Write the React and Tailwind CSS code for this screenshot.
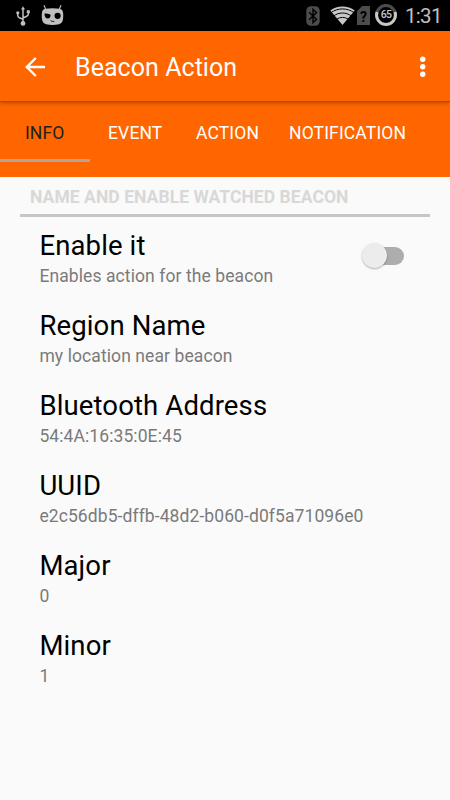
import clsx from 'clsx'

const tabs = [
  { label: 'INFO', style: 'w-[90px] pl-[25px] tracking-[0.1px]', active: true },
  { label: 'EVENT', style: 'w-[88px] pl-[18px] tracking-[0.15px]' },
  { label: 'ACTION', style: 'w-[100px] pl-[18px] tracking-[0.15px]' },
  { label: 'NOTIFICATION', style: 'grow pl-[11px] tracking-[0.15px]' },
]

const settings = [
  { title: 'Enable it', value: 'Enables action for the beacon', toggle: true },
  { title: 'Region Name', value: 'my location near beacon' },
  { title: 'Bluetooth Address', value: '54:4A:16:35:0E:45' },
  { title: 'UUID', value: 'e2c56db5-dffb-48d2-b060-d0f5a71096e0' },
  { title: 'Major', value: '0' },
  { title: 'Minor', value: '1' },
]

function UsbIcon() {
  return (
    <svg width="14" height="20" viewBox="0 0 14 20" fill="none" stroke="#c0c0c0" strokeWidth="1.5">
      <path d="M7 3v13M1.7 7v2.600c0 1.200.5 1.600 1.600 2.100L7 13.400M12.300 6v2c0 1.400-.5 1.800-1.600 2.300L7 12" />
      <path d="M7 .2l2 3.400H5z" fill="#c0c0c0" stroke="none" />
      <circle cx="7" cy="17.400" r="2.400" fill="#c0c0c0" stroke="none" />
      <circle cx="1.800" cy="6.800" r="1.600" fill="#c0c0c0" stroke="none" />
      <path d="M10.800 4.200h3v3h-3z" fill="#c0c0c0" stroke="none" />
    </svg>
  )
}

function RobotIcon() {
  return (
    <svg width="23" height="21" viewBox="0 0 23 21" fill="none">
      <path d="M3.200.6l1.600 4M19.800.6l-1.600 4" stroke="#c0c0c0" strokeWidth="1.200" strokeLinecap="round" />
      <path
        d="M4.500 3.700C9 3 14 3 18.500 3.700c2.300.4 3.200 1.600 3.500 3.800.4 2.600.3 5-.2 7.500-.5 2.300-1.600 3.600-3.800 4.200-4.300 1-8.700 1-13 0-2.200-.6-3.300-1.900-3.800-4.200-.5-2.500-.6-4.900-.2-7.500.3-2.200 1.200-3.400 3.500-3.800z"
        fill="#c0c0c0"
      />
      <path d="M3.500 8.600c1.800.1 4 .3 6.100 1.100.1 2.300-1 3.900-2.800 3.900-2.100 0-3.300-1.700-3.300-5z" fill="#000" />
      <circle cx="16.600" cy="10.800" r="3.100" fill="#000" />
      <path d="M9.500 15.400l1.300.9 2.600.2" stroke="#222" strokeWidth="1" />
    </svg>
  )
}

function BluetoothIcon() {
  return (
    <svg width="14" height="20" viewBox="0 0 14 20" fill="none">
      <rect x=".3" y=".3" width="13.400" height="19.400" rx="4.500" fill="#4c4c4c" />
      <path d="M3.200 6.200l7.300 7.200L7 16.700V3.300l3.500 3.300-7.300 7.200" stroke="#000" strokeWidth="1.400" />
    </svg>
  )
}

function WifiIcon() {
  return (
    <svg width="25" height="19" viewBox="0 0 25 19" fill="none">
      <path d="M12.500 19L.3 4.500C7-.9 18-.9 24.700 4.500z" fill="#c8c8c8" />
      <path d="M1 6.600C7.800 1.700 17.200 1.700 24 6.600M3.500 10C9 6 16 6 21.500 10M6.500 13.400c3.500-2.600 8.500-2.600 12 0" stroke="#000" strokeWidth="1" />
    </svg>
  )
}

function SimIcon() {
  return (
    <div className="flex h-[19px] w-[13px] items-center justify-center bg-[#4c4c4c] pt-[2px] text-[14px] font-bold leading-none text-black [clip-path:polygon(40%_0,100%_0,100%_100%,0_100%,0_28%)]">
      ?
    </div>
  )
}

function Battery() {
  return (
    <div className="relative flex h-[22px] w-[22px] items-center justify-center">
      <svg className="absolute inset-0" width="22" height="22" viewBox="0 0 22 22" fill="none" strokeWidth="3">
        <circle cx="11" cy="11" r="9.400" stroke="#4c4c4c" />
        <path d="M2.100 8A9.400 9.400 0 1 0 19.900 8" stroke="#c8c8c8" />
      </svg>
      <span className="text-[10.5px] font-medium leading-none tracking-[-0.6px] text-[#c8c8c8]">65</span>
    </div>
  )
}

function StatusBar() {
  return (
    <div className="flex h-[31px] items-center bg-black">
      <div className="flex grow items-center gap-[11px] pl-[16px] pt-px">
        <UsbIcon />
        <div className="-mt-[2px]">
          <RobotIcon />
        </div>
      </div>
      <div className="flex items-center pr-[8px]">
        <BluetoothIcon />
        <div className="ml-[10px]">
          <WifiIcon />
        </div>
        <div className="ml-[2px]">
          <SimIcon />
        </div>
        <div className="-mt-px ml-[5px]">
          <Battery />
        </div>
        <span className="ml-[8px] mt-[2px] w-[37px] whitespace-nowrap text-[20.5px] leading-none tracking-[-0.7px] text-[#c0c0c0]">
          1:31
        </span>
      </div>
    </div>
  )
}

function AppBar() {
  return (
    <header className="relative flex h-[71px] items-center border-b border-[#b84a02] bg-[#ff6600] pl-[25px] pr-[19px] pt-[2px] shadow-[0_1px_4px_rgba(0,0,0,0.3)]">
      <svg width="21" height="20" viewBox="0 0 21 20" fill="none" stroke="#fff" strokeWidth="2.400">
        <path d="M20 10H2M10.800 1L1.800 10l9 9" />
      </svg>
      <h1 className="grow pl-[29px] pt-[2px] text-[25px] leading-[30px] tracking-[0.05px] text-white">Beacon Action</h1>
      <svg width="16" height="22" viewBox="0 0 16 22" fill="#fff">
        <circle cx="7.700" cy="3.300" r="2.700" />
        <circle cx="7.700" cy="10.700" r="2.700" />
        <circle cx="7.700" cy="18.300" r="2.700" />
      </svg>
    </header>
  )
}

function Tabs() {
  return (
    <nav className="flex h-[75px] bg-[#ff6600] text-[17.5px]">
      {tabs.map((tab) => (
        <div
          key={tab.label}
          className={clsx(
            'h-[60px] whitespace-nowrap border-b-[3px] pt-[19px] leading-[25px]',
            tab.style,
            tab.active ? 'border-[#b3a39a] text-[#212121]' : 'border-transparent text-white'
          )}
        >
          {tab.label}
        </div>
      ))}
    </nav>
  )
}

function Switch() {
  return (
    <div className="relative mr-[26px] mt-[18px] h-[18px] w-[37px] rounded-full bg-[#adadad]">
      <div className="absolute -left-[5px] -top-[4px] h-[25px] w-[25px] rounded-full bg-[#ececec] shadow-[0_1px_2px_rgba(0,0,0,0.3)]" />
    </div>
  )
}

function Setting({ title, value, toggle }) {
  return (
    <div className="flex h-[80px] justify-between pl-[19.4px] pt-[12px]">
      <div>
        <div className="text-[27.5px] leading-[34px] tracking-[0.13px] text-black">{title}</div>
        <div className="text-[17.5px] leading-[26px] tracking-[0.09px] text-[#7a7a7a]">{value}</div>
      </div>
      {toggle && <Switch />}
    </div>
  )
}

export default function App() {
  return (
    <div className="h-[800px] w-[450px] overflow-hidden bg-[#fafafa] font-['Roboto',sans-serif]">
      <StatusBar />
      <AppBar />
      <Tabs />
      <main className="px-5">
        <h2 className="h-[40px] border-b-[3px] border-[#c6c6c6] pl-[10px] pt-[8px] text-[17.5px] font-bold leading-[25px] tracking-[0.06px] text-[#d8d8d8]">
          NAME AND ENABLE WATCHED BEACON
        </h2>
        {settings.map((item) => (
          <Setting key={item.title} {...item} />
        ))}
      </main>
    </div>
  )
}
